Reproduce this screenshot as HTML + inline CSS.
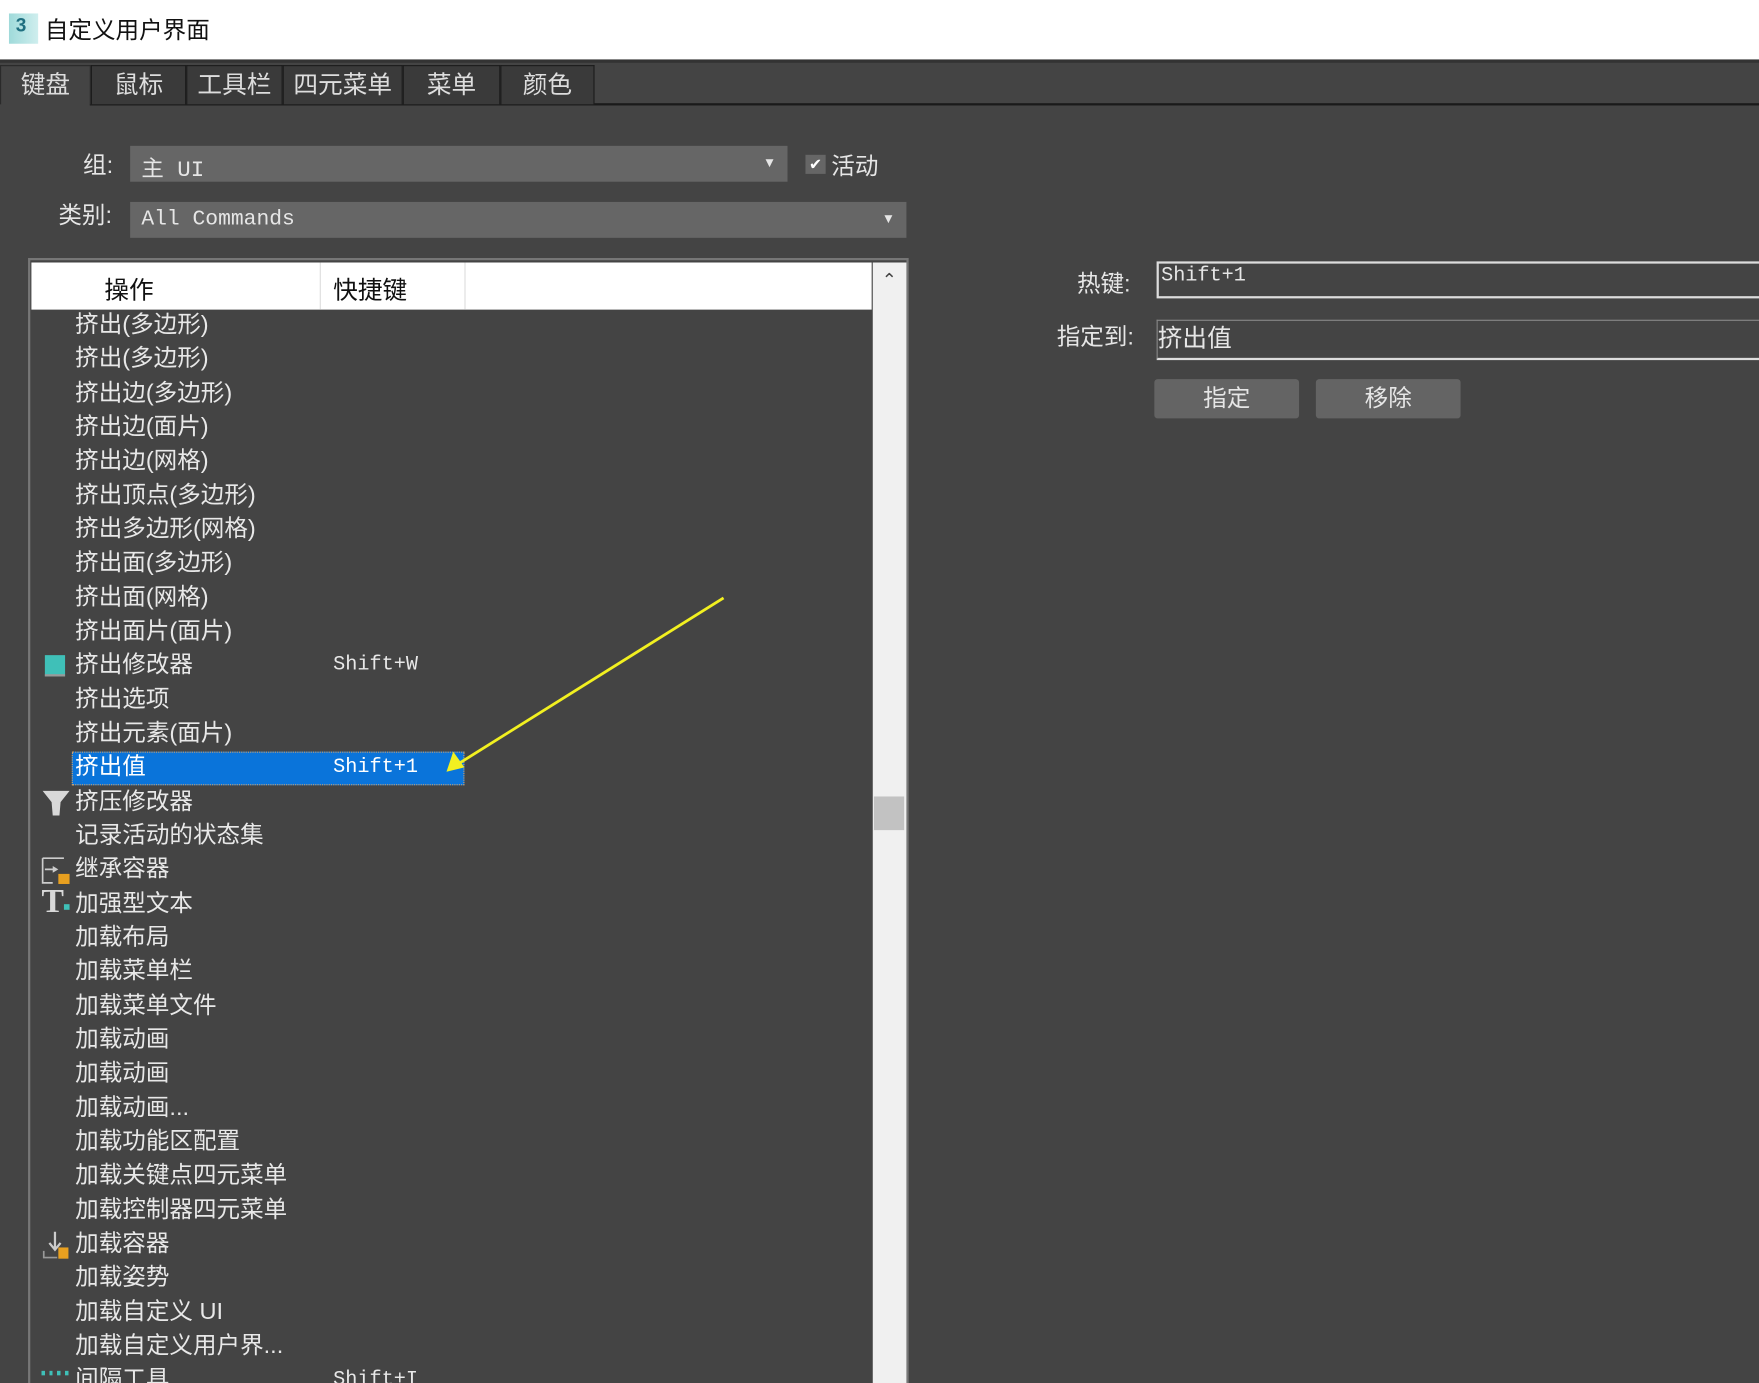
<!DOCTYPE html>
<html><head><meta charset="utf-8">
<style>
html,body{margin:0;padding:0;width:1759px;height:1383px;overflow:hidden;background:#444;}
#w{position:absolute;left:0;top:0;width:1568px;height:1233px;transform:scale(1.12181);transform-origin:0 0;background:#444;overflow:hidden;
font-family:"Liberation Sans","Noto Sans CJK SC",sans-serif;color:#e6e6e6;}
.a{position:absolute;white-space:nowrap;}
.tb{position:absolute;top:58px;height:35px;background:#3a3a3a;border:1px solid #1c1c1c;border-bottom:none;font-size:22px;line-height:34px;text-align:center;color:#ddd;box-sizing:border-box;}
.row{position:absolute;left:67px;font-size:21px;line-height:30px;height:30px;color:#e8e8e8;}
.sc{position:absolute;left:297px;font-family:"Liberation Mono",monospace;font-size:18px;line-height:30px;color:#e8e8e8;}
.mono{font-family:"Liberation Mono","Noto Sans CJK SC",monospace;}
</style></head><body><div id="w">
<div class="a" style="left:0;top:0;width:1568px;height:53px;background:#fff;"></div>
<div class="a" style="left:8px;top:12px;width:26px;height:27px;background:linear-gradient(90deg,#9fdada,#cfeeee);"></div>
<div class="a" style="left:14px;top:13px;font-size:17px;font-weight:bold;color:#1f6f80;">3</div>
<div class="a" style="left:40px;top:11px;font-size:21px;color:#111;">自定义用户界面</div>
<div class="a" style="left:0;top:53px;width:1568px;height:3px;background:#333;"></div>
<!-- tabs -->
<div class="a" style="left:80px;top:92px;width:1488px;height:2px;background:#1a1a1a;"></div>
<div class="tb" style="left:0;width:81px;background:#444;border-color:#2a2a2a;">键盘</div>
<div class="tb" style="left:81px;width:85px;">鼠标</div>
<div class="tb" style="left:166px;width:86px;">工具栏</div>
<div class="tb" style="left:252px;width:107px;">四元菜单</div>
<div class="tb" style="left:359px;width:87px;">菜单</div>
<div class="tb" style="left:446px;width:84px;">颜色</div>
<!-- group -->
<div class="a" style="left:74px;top:131px;font-size:21px;">组:</div>
<div class="a" style="left:116px;top:130px;width:586px;height:32px;background:#666;"></div>
<div class="a mono" style="left:126px;top:134px;font-size:20px;">主 UI</div>
<div class="a" style="left:680px;top:138px;font-size:12px;">▼</div>
<div class="a" style="left:718px;top:138px;width:18px;height:17px;background:#666;color:#fff;font-size:14px;line-height:17px;text-align:center;">✔</div>
<div class="a" style="left:741px;top:132px;font-size:21px;">活动</div>
<div class="a" style="left:52px;top:176px;font-size:21px;">类别:</div>
<div class="a" style="left:116px;top:180px;width:692px;height:32px;background:#666;"></div>
<div class="a mono" style="left:126px;top:184px;font-size:19px;">All Commands</div>
<div class="a" style="left:786px;top:188px;font-size:12px;">▼</div>
<!-- list -->
<div class="a" style="left:25px;top:230px;width:785px;height:1010px;border:2px solid #777;box-sizing:border-box;background:#444;"></div>
<div class="a" style="left:28px;top:234px;width:749px;height:42px;background:#fff;"></div>
<div class="a" style="left:285px;top:234px;width:1px;height:42px;background:#ddd;"></div>
<div class="a" style="left:414px;top:234px;width:1px;height:42px;background:#ddd;"></div>
<div class="a" style="left:93px;top:241px;font-size:22px;color:#111;">操作</div>
<div class="a" style="left:297px;top:241px;font-size:22px;color:#111;">快捷键</div>
<div class="a" style="left:778px;top:234px;width:30px;height:1000px;background:#f0f0f0;"></div>
<div class="a" style="left:786px;top:240px;font-size:16px;color:#444;">⌃</div>
<div class="a" style="left:779px;top:710px;width:27px;height:30px;background:#c2c2c2;"></div>
<!-- selected -->
<div class="a" style="left:64px;top:670px;width:350px;height:30px;background:#0a74da;border:1px dotted #c8a070;box-sizing:border-box;"></div>
<div class="row" style="top:275px">挤出(多边形)</div>
<div class="row" style="top:305px">挤出(多边形)</div>
<div class="row" style="top:336px">挤出边(多边形)</div>
<div class="row" style="top:366px">挤出边(面片)</div>
<div class="row" style="top:396px">挤出边(网格)</div>
<div class="row" style="top:427px">挤出顶点(多边形)</div>
<div class="row" style="top:457px">挤出多边形(网格)</div>
<div class="row" style="top:487px">挤出面(多边形)</div>
<div class="row" style="top:518px">挤出面(网格)</div>
<div class="row" style="top:548px">挤出面片(面片)</div>
<div class="row" style="top:578px">挤出修改器</div><div class="sc" style="top:578px">Shift+W</div>
<div class="a" style="left:40px;top:584px;width:18px;height:17px;background:#3fc0b8;border-bottom:2px solid #999;"></div>
<div class="row" style="top:609px">挤出选项</div>
<div class="row" style="top:639px">挤出元素(面片)</div>
<div class="row" style="top:669px;color:#fff">挤出值</div><div class="sc" style="top:669px;color:#fff">Shift+1</div>
<div class="row" style="top:700px">挤压修改器</div>
<svg class="a" style="left:37px;top:703px" width="26" height="26"><path d="M1 2 H25 L17 12 L16 24 H10 L9 12 Z" fill="#d8d8d8"/></svg>
<div class="row" style="top:730px">记录活动的状态集</div>
<div class="row" style="top:760px">继承容器</div>
<svg class="a" style="left:37px;top:763px" width="26" height="26"><path d="M1 2H20M1 2V24H10M3 12H12" stroke="#ccc" fill="none" stroke-width="1.5"/><path d="M10 9L15 12L10 15Z" fill="#ccc"/><rect x="15" y="16" width="10" height="9" fill="#e8a020"/></svg>
<div class="row" style="top:791px">加强型文本</div>
<div class="a" style="left:37px;top:787px;font-family:'Liberation Serif',serif;font-size:30px;font-weight:bold;color:#d8d8d8;">T</div>
<div class="a" style="left:57px;top:806px;width:5px;height:5px;background:#3fc0b8;"></div>
<div class="row" style="top:821px">加载布局</div>
<div class="row" style="top:851px">加载菜单栏</div>
<div class="row" style="top:882px">加载菜单文件</div>
<div class="row" style="top:912px">加载动画</div>
<div class="row" style="top:942px">加载动画</div>
<div class="row" style="top:973px">加载动画...</div>
<div class="row" style="top:1003px">加载功能区配置</div>
<div class="row" style="top:1033px">加载关键点四元菜单</div>
<div class="row" style="top:1064px">加载控制器四元菜单</div>
<div class="row" style="top:1094px">加载容器</div>
<svg class="a" style="left:37px;top:1097px" width="26" height="26"><path d="M12 1V16M7 11L12 17L17 11" stroke="#ccc" fill="none" stroke-width="2"/><path d="M2 18V24H14" stroke="#999" fill="none" stroke-width="1.5"/><rect x="15" y="15" width="9" height="10" fill="#e8a020"/></svg>
<div class="row" style="top:1124px">加载姿势</div>
<div class="row" style="top:1155px">加载自定义 UI</div>
<div class="row" style="top:1185px">加载自定义用户界...</div>
<div class="row" style="top:1215px">间隔工具</div><div class="sc" style="top:1215px">Shift+I</div>
<div class="a" style="left:37px;top:1222px;width:26px;height:4px;background:repeating-linear-gradient(90deg,#3fc0b8 0 3px,transparent 3px 7px);"></div>
<!-- arrow -->
<svg class="a" style="left:0;top:0" width="1568" height="1233"><line x1="645" y1="533" x2="410" y2="680" stroke="#f2f020" stroke-width="2.5"/><path d="M398 688 L404 670 L414 684 Z" fill="#f2f020"/></svg>
<!-- right -->
<div class="a" style="left:960px;top:237px;font-size:21px;">热键:</div>
<div class="a" style="left:1031px;top:233px;width:560px;height:33px;border:2px solid #ddd;box-sizing:border-box;"></div>
<div class="a mono" style="left:1035px;top:236px;font-size:18px;">Shift+1</div>
<div class="a" style="left:942px;top:284px;font-size:21px;">指定到:</div>
<div class="a" style="left:1031px;top:285px;width:560px;height:36px;border:1px solid #888;border-bottom:2px solid #ddd;box-sizing:border-box;"></div>
<div class="a" style="left:1032px;top:284px;font-size:22px;">挤出值</div>
<div class="a" style="left:1029px;top:338px;width:129px;height:35px;background:#646464;border-radius:3px;text-align:center;font-size:21px;line-height:35px;">指定</div>
<div class="a" style="left:1173px;top:338px;width:129px;height:35px;background:#646464;border-radius:3px;text-align:center;font-size:21px;line-height:35px;">移除</div>
</div></body></html>
